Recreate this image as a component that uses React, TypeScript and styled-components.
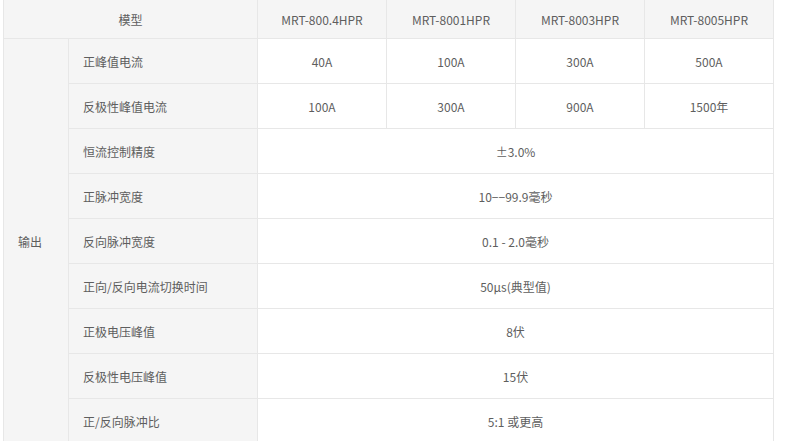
import React from "react";
import styled, { createGlobalStyle } from "styled-components";

const Global = createGlobalStyle`
  html, body { margin: 0; padding: 0; background: #ffffff; }
  body { font-family: "Noto Sans CJK SC", "Liberation Sans", sans-serif; }
`;

const Page = styled.div`
  padding: 0 0 0 3px;
  width: 800px;
  height: 441px;
  overflow: hidden;
  box-sizing: border-box;
`;

const Grid = styled.div`
  display: grid;
  grid-template-columns: 64px 188px repeat(4, 128px);
  grid-template-rows: 38px repeat(9, 44px);
  gap: 1px;
  width: max-content;
  background: #e7e7e7;
  border: 1px solid #e7e7e7;
  border-top: none;
`;

const Cell = styled.div<{ $tone?: "head" | "label" | "value"; $align?: "left" | "center"; $col?: string; $row?: string }>`
  display: flex;
  align-items: center;
  justify-content: ${(p) => (p.$align === "left" ? "flex-start" : "center")};
  padding-left: ${(p) => (p.$align === "left" ? "14px" : "0")};
  padding-top: 1px;
  box-sizing: border-box;
  background: ${(p) => (p.$tone === "value" ? "#ffffff" : "#f5f5f5")};
  color: #5e5e5e;
  font-size: 12px;
  line-height: 16px;
  white-space: nowrap;
  grid-column: ${(p) => p.$col ?? "auto"};
  grid-row: ${(p) => p.$row ?? "auto"};
`;

const models = ["MRT-800.4HPR", "MRT-8001HPR", "MRT-8003HPR", "MRT-8005HPR"];

const multi: [string, string[]][] = [
  ["正峰值电流", ["40A", "100A", "300A", "500A"]],
  ["反极性峰值电流", ["100A", "300A", "900A", "1500年"]],
];

const single: [string, string][] = [
  ["恒流控制精度", "±3.0%"],
  ["正脉冲宽度", "10−−99.9毫秒"],
  ["反向脉冲宽度", "0.1 - 2.0毫秒"],
  ["正向/反向电流切换时间", "50μs(典型值)"],
  ["正极电压峰值", "8伏"],
  ["反极性电压峰值", "15伏"],
  ["正/反向脉冲比", "5:1 或更高"],
];

export default function App() {
  return (
    <Page>
      <Global />
      <Grid>
        <Cell $tone="head" $col="1 / 3">模型</Cell>
        {models.map((m) => (
          <Cell key={m} $tone="head">{m}</Cell>
        ))}
        <Cell $tone="label" $align="left" $col="1" $row="2 / 11">输出</Cell>
        {multi.map(([label, vals]) => (
          <React.Fragment key={label}>
            <Cell $tone="label" $align="left" $col="2">{label}</Cell>
            {vals.map((v, i) => (
              <Cell key={i} $tone="value">{v}</Cell>
            ))}
          </React.Fragment>
        ))}
        {single.map(([label, v]) => (
          <React.Fragment key={label}>
            <Cell $tone="label" $align="left" $col="2">{label}</Cell>
            <Cell $tone="value" $col="3 / 7">{v}</Cell>
          </React.Fragment>
        ))}
      </Grid>
    </Page>
  );
}
